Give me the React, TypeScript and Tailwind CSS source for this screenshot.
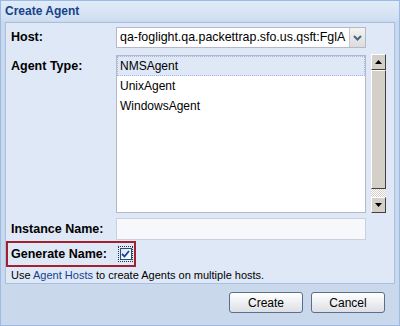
import React from "react";

const font = { fontFamily: '"Liberation Sans", Arial, sans-serif' };

function ScrollBtn({ up }: { up?: boolean }) {
  return (
    <div className="w-[15px] h-[16px] bg-[#d4d0c8] border border-t-white border-l-white border-r-[#404040] border-b-[#404040] flex items-center justify-center">
      <svg width="7" height="4" viewBox="0 0 7 4">
        {up ? <polygon points="0,4 7,4 3.5,0" fill="#000" /> : <polygon points="0,0 7,0 3.5,4" fill="#000" />}
      </svg>
    </div>
  );
}

export default function App() {
  return (
    <div style={font} className="w-[400px] h-[326px] bg-[#c9d8eb] border border-[#99bbe8] flex flex-col text-black overflow-hidden">
      <div className="h-[20px] bg-gradient-to-b from-[#e2ecf8] to-[#cfdef2] flex items-center pl-[4px] shrink-0">
        <span className="text-[12px] font-bold text-[#15428b] leading-none">Create Agent</span>
      </div>
      <div className="mx-[4px] mt-[1px] h-[262px] bg-[#dfe8f6] border border-[#a7bfe0] pl-[5px] pt-[4px] flex flex-col">
        <div className="flex items-center h-[21px]">
          <div className="w-[105px] text-[12.5px] font-bold">Host:</div>
          <div className="w-[250px] h-[21px] flex border border-[#b5b8c8] bg-white">
            <div className="flex-1 overflow-hidden whitespace-nowrap text-[12.4px] pl-[3px] leading-[19px]">
              qa-foglight.qa.packettrap.sfo.us.qsft:FglA
            </div>
            <div className="w-[16px] h-full bg-gradient-to-b from-[#f3f3f3] to-[#dcdcdc] border-l border-[#c8c8c8] flex items-center justify-center">
              <svg width="9" height="6" viewBox="0 0 9 6">
                <polyline points="1,1 4.5,4.5 8,1" fill="none" stroke="#4c6586" strokeWidth="2" />
              </svg>
            </div>
          </div>
        </div>
        <div className="flex mt-[7px] h-[158px]">
          <div className="w-[105px] text-[12.5px] font-bold pt-[2px]">Agent Type:</div>
          <div className="w-[250px] h-[158px] border border-[#b5b8c8] bg-white text-[12px]">
            <div className="h-[20px] flex items-center pl-[2px] bg-[#dfe8f6] border border-dotted border-[#a3bae9]">NMSAgent</div>
            <div className="h-[20px] flex items-center pl-[3px]">UnixAgent</div>
            <div className="h-[20px] flex items-center pl-[3px]">WindowsAgent</div>
          </div>
          <div className="ml-[5px] -mt-[1px] w-[15px] h-[159px] flex flex-col">
            <ScrollBtn up />
            <div className="h-[119px] bg-[#d4d0c8] border border-t-white border-l-white border-r-[#404040] border-b-[#404040]" />
            <div className="flex-1 bg-[repeating-conic-gradient(#ffffff_0_25%,#d4d0c8_0_50%)] bg-[length:2px_2px]" />
            <ScrollBtn />
          </div>
        </div>
        <div className="flex items-center mt-[5px] h-[22px]">
          <div className="w-[105px] text-[12.5px] font-bold">Instance Name:</div>
          <div className="w-[250px] h-[22px] border border-[#c8d1dd] bg-[#f6f8fc]" />
        </div>
        <div className="mt-[1px] -ml-[5px] w-[130px] h-[26px] border-2 border-[#a3202e] flex items-center pl-[3px]">
          <div className="w-[107px] text-[12.5px] font-bold">Generate Name:</div>
          <div className="w-[15px] h-[16px] border border-dotted border-[#333] flex items-center justify-center">
            <div className="w-[12px] h-[12px] border border-[#1c5180] bg-gradient-to-br from-[#dce4ef] to-white flex items-center justify-center">
              <svg width="9" height="8" viewBox="0 0 9 8">
                <polyline points="1,4 3.5,6.5 8,1" fill="none" stroke="#1f3f9f" strokeWidth="1.8" />
              </svg>
            </div>
          </div>
        </div>
        <div className="mt-[2px] text-[11px] leading-[13px]">
          Use <span className="text-[#15428b]">Agent Hosts</span> to create Agents on multiple hosts.
        </div>
      </div>
      <div className="flex justify-end gap-[8px] mt-[8px] pr-[14px]">
        <button className="w-[74px] h-[21px] rounded-[3px] border border-[#5a6f8a] bg-gradient-to-b from-white to-[#dcdfe5] text-[12px] leading-none">Create</button>
        <button className="w-[74px] h-[21px] rounded-[3px] border border-[#5a6f8a] bg-gradient-to-b from-white to-[#dcdfe5] text-[12px] leading-none">Cancel</button>
      </div>
    </div>
  );
}
